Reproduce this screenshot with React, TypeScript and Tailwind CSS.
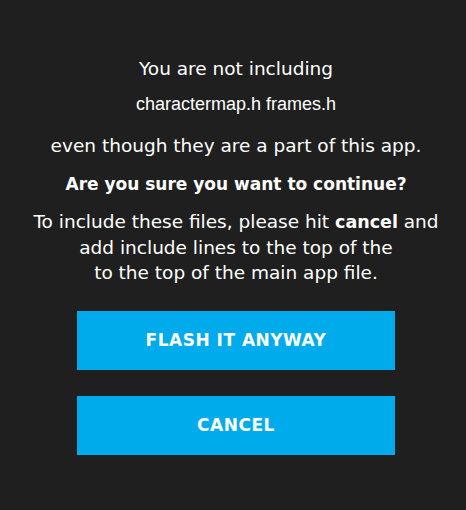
export default function App() {
  return (
    <div className="w-[466px] h-[510px] bg-[#1f1f1f] text-white flex flex-col items-center text-center pl-[6px]" style={{ fontFamily: '"DejaVu Sans", sans-serif' }}>
      <p className="mt-[56px] text-[18.5px] leading-[26px]">You are not including</p>
      <p className="mt-[9px] text-[18px] leading-[26px]" style={{ fontFamily: '"Liberation Sans", Arial, sans-serif' }}>charactermap.h frames.h</p>
      <p className="mt-[16px] text-[18.5px] leading-[26px]">even though they are a part of this app.</p>
      <p className="mt-[12px] text-[17px] leading-[26px] font-bold">Are you sure you want to continue?</p>
      <p className="mt-[12px] text-[18.5px] leading-[25px]">
        To include these files, please hit <b className="text-[17.5px]">cancel</b> and
        <br />add include lines to the top of the
        <br />to the top of the main app file.
      </p>
      <button className="mt-[26px] w-[318px] h-[59px] bg-[#00abec] text-white font-bold text-[17px] tracking-[0.5px]">FLASH IT ANYWAY</button>
      <button className="mt-[26px] w-[318px] h-[59px] bg-[#00abec] text-white font-bold text-[17px] tracking-[0.5px]">CANCEL</button>
    </div>
  );
}
